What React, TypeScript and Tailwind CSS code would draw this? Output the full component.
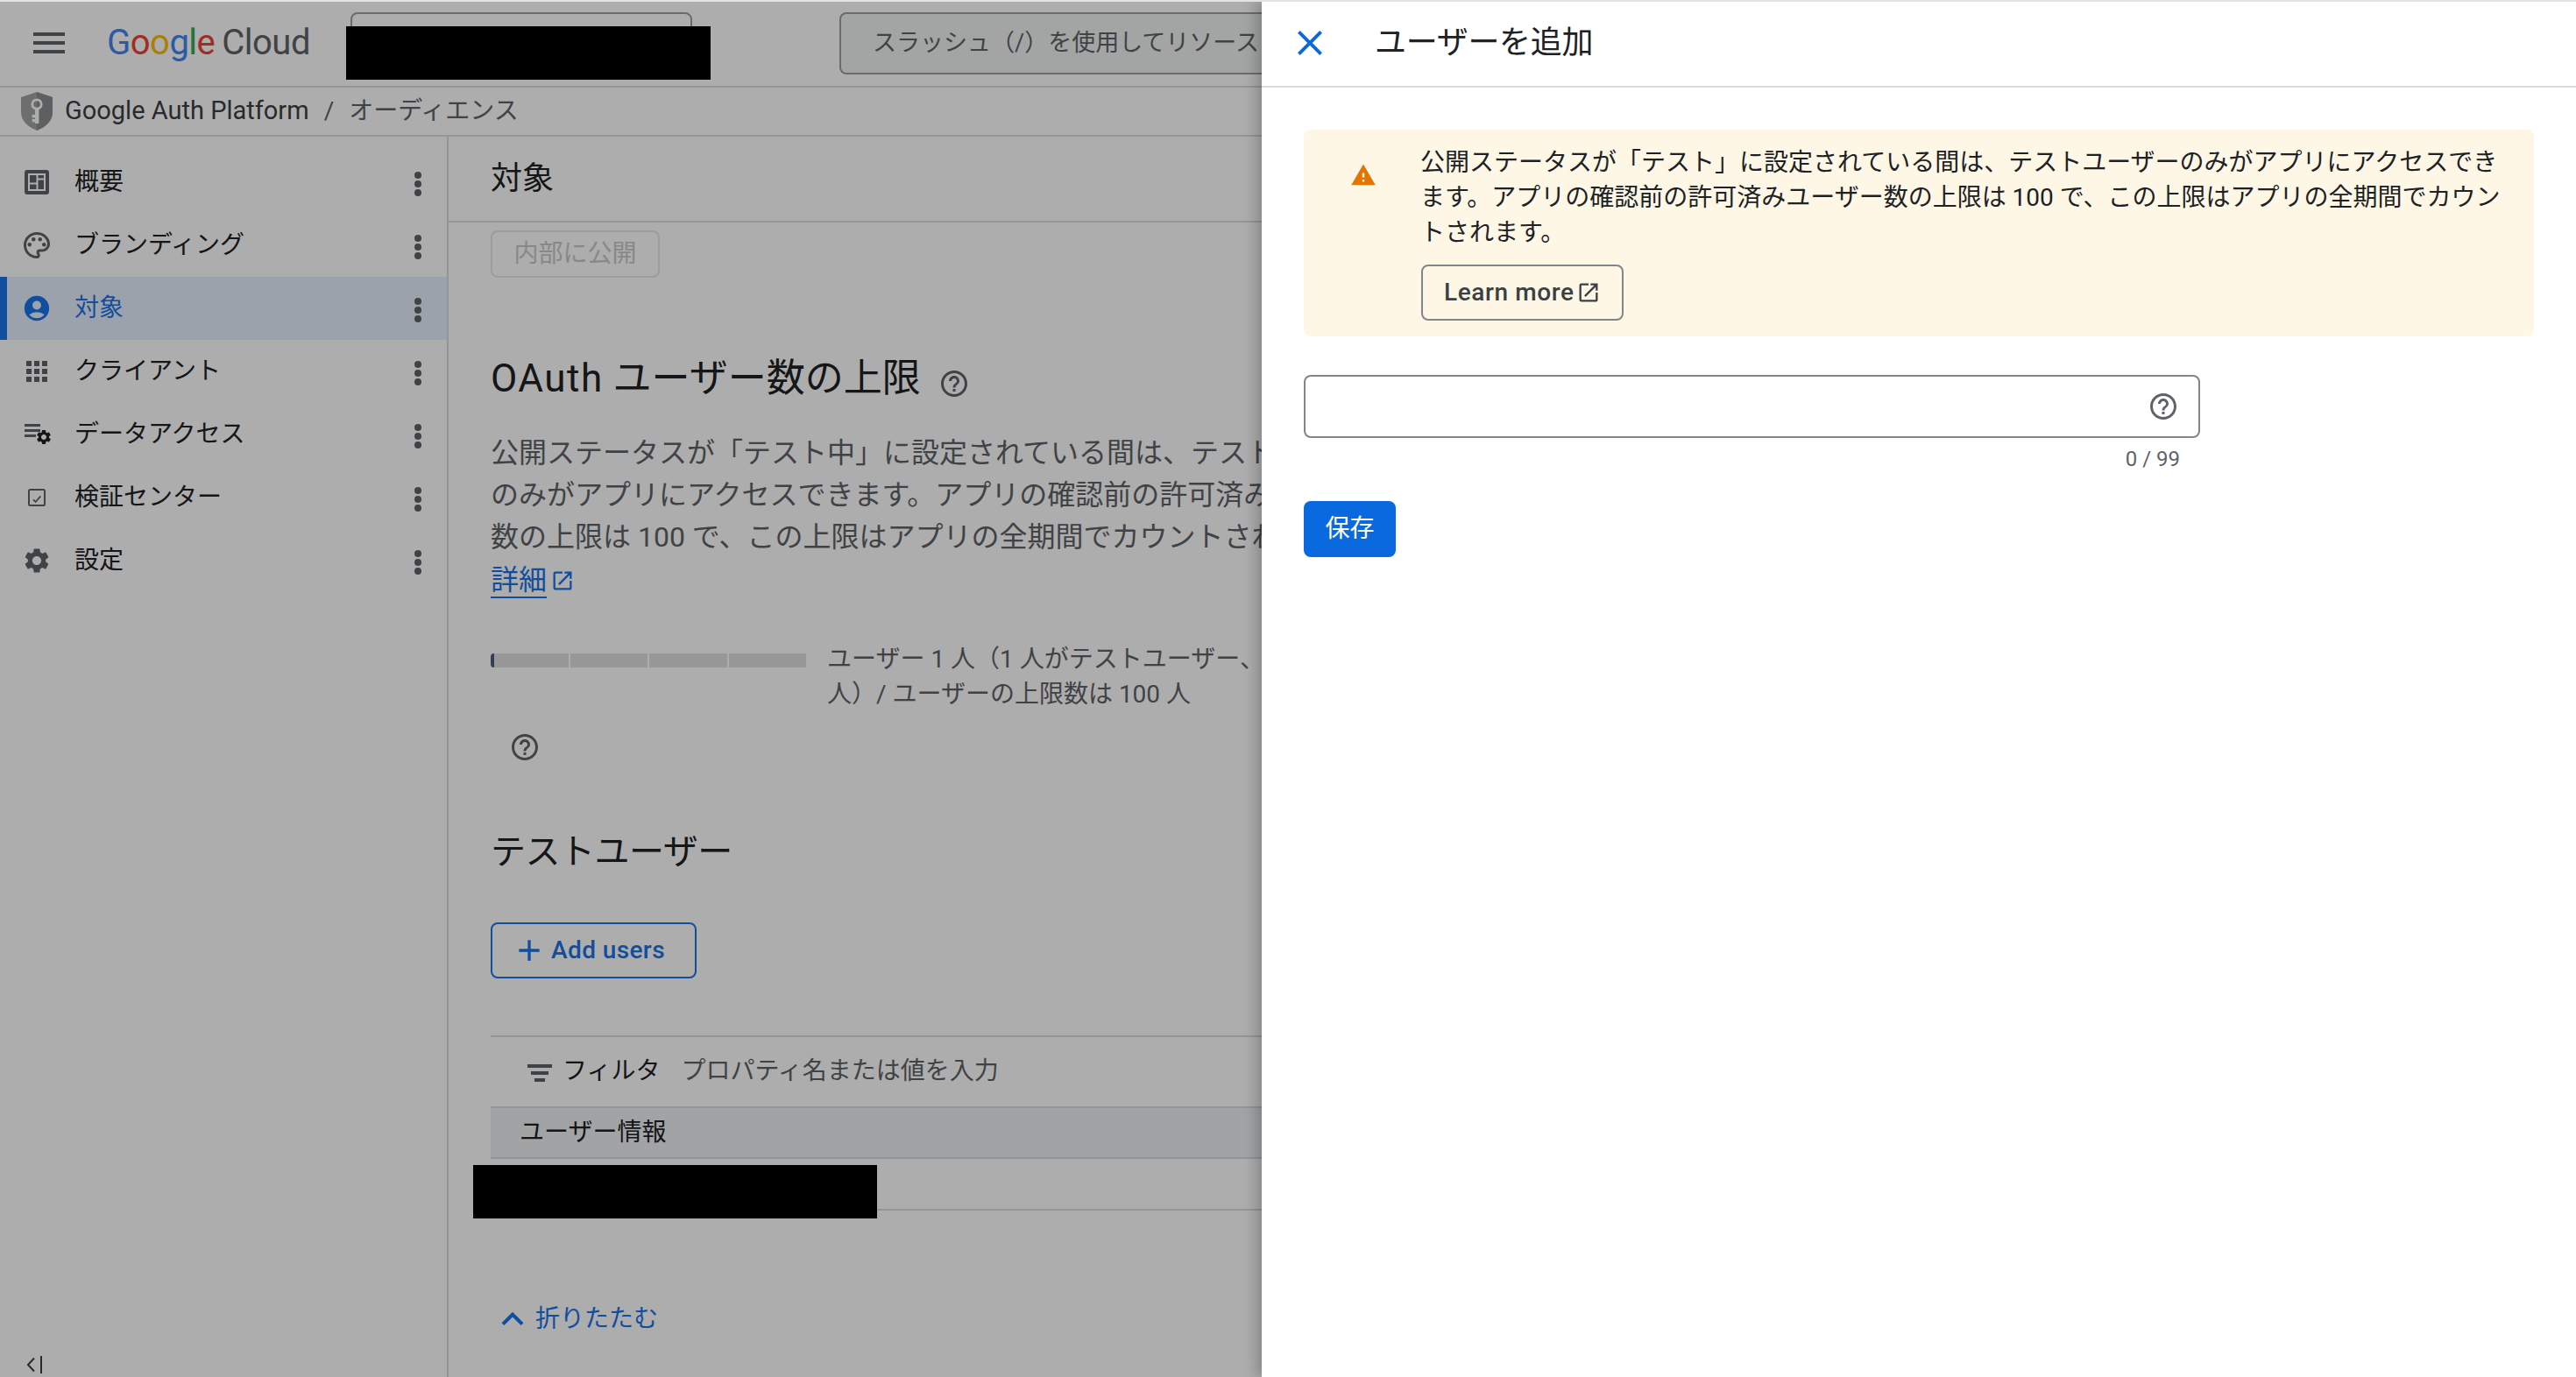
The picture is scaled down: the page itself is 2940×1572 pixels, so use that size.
import React from "react";
import {
  MdAccountCircle,
  MdAdd,
  MdApps,
  MdClose,
  MdExpandLess,
  MdHelpOutline,
  MdMenu,
  MdOpenInNew,
  MdOutlinePalette,
  MdSettings,
  MdWarning,
} from "react-icons/md";

function DashIcon() {
  return (
    <svg width="28" height="28" viewBox="0 0 28 28">
      <rect width="28" height="28" rx="3" fill="#5f6368" />
      <rect x="4" y="4" width="20" height="20" fill="#fff" />
      <rect x="6" y="6" width="7.5" height="8.5" fill="#5f6368" />
      <rect x="6" y="16.5" width="7.5" height="5.5" fill="#5f6368" />
      <rect x="15.5" y="6" width="6.5" height="3.5" fill="#5f6368" />
      <rect x="15.5" y="11.5" width="6.5" height="10.5" fill="#5f6368" />
    </svg>
  );
}

function DataIcon() {
  return (
    <svg width="32" height="25" viewBox="0 0 32 25" fill="#5f6368" className="ml-[4px]">
      <rect x="0" y="0" width="18" height="3" />
      <rect x="0" y="6" width="18" height="3" />
      <rect x="0" y="12" width="13" height="3" />
      <MdSettings x={12} y={5} size={20} />
    </svg>
  );
}

function CheckIcon() {
  return (
    <svg width="20" height="20" viewBox="0 0 20 20" fill="none">
      <rect x="1" y="1" width="18" height="18" rx="1.5" stroke="#5f6368" strokeWidth="2" />
      <path d="M6 12.3L8.7 15L14.3 8.3" stroke="#5f6368" strokeWidth="1.8" />
    </svg>
  );
}

function ShieldIcon() {
  return (
    <svg width="36" height="44" viewBox="0 0 36 44">
      <path d="M18 0L36 6V23C36 33 28 40 18 44C8 40 0 33 0 23V6Z" fill="#a0a3a6" />
      <path d="M18 0L36 6V23C36 33 28 40 18 44Z" fill="#8a8d90" />
      <circle cx="18" cy="14" r="5.2" fill="none" stroke="#fff" strokeWidth="2.8" />
      <rect x="16" y="19" width="4.4" height="17" fill="#fff" />
      <rect x="12.6" y="26" width="3.6" height="3.4" fill="#fff" />
      <rect x="12.6" y="31" width="3.6" height="3.4" fill="#fff" />
    </svg>
  );
}

function CollapseIcon() {
  return (
    <svg width="20" height="20" viewBox="0 0 20 20" fill="none" stroke="#3c4043" strokeWidth="2">
      <path d="M9 2.5L2 10l7 7.5" />
      <path d="M17 0v20" />
    </svg>
  );
}

function FilterBars() {
  return (
    <svg width="28" height="20" viewBox="0 0 28 20" fill="#5f6368" className="mt-[3px]">
      <rect x="0" y="0" width="28" height="4" />
      <rect x="4" y="8" width="20" height="4" />
      <rect x="8" y="16" width="12" height="4" />
    </svg>
  );
}

function Dots() {
  return (
    <svg width="10" height="28" viewBox="0 0 10 28" fill="#5f6368" className="ml-auto translate-y-[2px]">
      <circle cx="5" cy="4" r="4" />
      <circle cx="5" cy="14" r="4" />
      <circle cx="5" cy="24" r="4" />
    </svg>
  );
}

const navItems: { label: string; icon: React.ReactNode; active?: boolean }[] = [
  { label: "概要", icon: <DashIcon /> },
  { label: "ブランディング", icon: <MdOutlinePalette size={36} color="#5f6368" /> },
  { label: "対象", icon: <MdAccountCircle size={34} color="#1a73e8" />, active: true },
  { label: "クライアント", icon: <MdApps size={36} color="#5f6368" /> },
  { label: "データアクセス", icon: <DataIcon /> },
  { label: "検証センター", icon: <CheckIcon /> },
  { label: "設定", icon: <MdSettings size={34} color="#5f6368" /> },
];

function Sidebar() {
  return (
    <aside className="flex w-[512px] shrink-0 flex-col border-r-2 border-[#dadce0] pt-[16px]">
      {navItems.map((item) => (
        <div
          key={item.label}
          className={`flex h-[72px] items-center border-l-8 pl-[16px] pr-[28px] ${
            item.active ? "border-[#1a73e8] bg-[#e6effc] text-[#1a73e8]" : "border-transparent text-[#202124]"
          }`}
        >
          <span className="flex w-[36px] items-center justify-center">{item.icon}</span>
          <span className="ml-[25px] text-[28px] leading-[40px]">{item.label}</span>
          <Dots />
        </div>
      ))}
      <div className="mt-auto pb-[4px] pl-[30px]">
        <CollapseIcon />
      </div>
    </aside>
  );
}

function Main() {
  return (
    <main className="min-w-0 flex-1">
      <div className="flex h-[98px] items-center border-b-2 border-[#dadce0] pl-[48px]">
        <h1 className="text-[36px] font-normal leading-[48px] text-[#202124]">対象</h1>
      </div>
      <div className="pl-[48px]">
        <div className="mt-[9px] flex h-[54px] w-[193px] items-center justify-center rounded-[8px] border-2 border-[#e6e6e6] text-[28px] text-[#c9c9c9]">
          内部に公開
        </div>

        <div className="mt-[85px] flex h-[60px] items-center">
          <h2 className="whitespace-nowrap text-[44px] font-normal leading-[60px] text-[#202124]">
            <span className="tracking-[1.5px]">OAuth</span> ユーザー数の上限
          </h2>
          <MdHelpOutline size={36} color="#5f6368" className="ml-[20px] mt-[12px]" />
        </div>

        <div className="mt-[31px] whitespace-nowrap text-[32px] leading-[48px] text-[#5f6368]">
          <p>公開ステータスが「テスト中」に設定されている間は、テスト</p>
          <p>のみがアプリにアクセスできます。アプリの確認前の許可済み</p>
          <p>数の上限は 100 で、この上限はアプリの全期間でカウントされ</p>
          <div className="flex h-[48px] items-start pt-[6px] text-[#1a73e8]">
            <span className="h-[40px] border-b-2 border-[#1a73e8] leading-[38px]">詳細</span>
            <MdOpenInNew size={28} className="ml-[4px] mt-[6px]" />
          </div>
        </div>

        <div className="mt-[46px] flex">
          <div className="mt-[15px] flex h-[16px] w-[360px] shrink-0 gap-[2px] overflow-hidden rounded-l-[4px]">
            <div className="flex-1 bg-[#e0e0e0]">
              <div className="h-full w-[4px] bg-[#4a5f7a]" />
            </div>
            <div className="flex-1 bg-[#e0e0e0]" />
            <div className="flex-1 bg-[#e0e0e0]" />
            <div className="flex-1 bg-[#e0e0e0]" />
          </div>
          <div className="ml-[24px] whitespace-nowrap pt-[2px] text-[28px] leading-[40px] text-[#5f6368]">
            <p>ユーザー 1 人（1 人がテストユーザー、</p>
            <p>人）/ ユーザーの上限数は 100 人</p>
          </div>
        </div>

        <MdHelpOutline size={36} color="#5f6368" className="ml-[21px] mt-[22px]" />

        <h2 className="mt-[74px] text-[40px] font-normal leading-[56px] tracking-[-0.5px] text-[#202124]">テストユーザー</h2>

        <button className="mt-[52px] flex h-[64px] w-[235px] items-center rounded-[8px] border-2 border-[#1a73e8] pl-[22px] text-[28px] font-medium tracking-[0.4px] text-[#1a73e8]">
          <MdAdd size={40} />
          <span className="ml-[5px]">Add users</span>
        </button>

        <div className="mt-[65px] border-t-2 border-[#dadce0]">
          <div className="flex h-[79px] items-center pl-[42px] text-[28px]">
            <FilterBars />
            <span className="ml-[12px] -translate-y-[1px] text-[#202124]">フィルタ</span>
            <span className="ml-[24px] -translate-y-[1px] whitespace-nowrap text-[#5f6368]">プロパティ名または値を入力</span>
          </div>
          <div className="flex h-[60px] items-center border-y-2 border-[#dadce0] bg-[#edf0f2] pl-[33px] text-[28px] text-[#202124]">
            ユーザー情報
          </div>
          <div className="h-[59px] border-b-2 border-[#dadce0]" />
        </div>

        <div className="mt-[100px] flex h-[48px] items-center text-[28px] text-[#1a73e8]">
          <MdExpandLess size={50} className="shrink-0" />
          <span className="ml-[1px]">折りたたむ</span>
        </div>
      </div>
    </main>
  );
}

function Panel() {
  return (
    <section className="absolute bottom-0 left-[1440px] right-0 top-0 bg-white shadow-[-6px_0_14px_rgba(0,0,0,0.22)]">
      <header className="flex h-[100px] items-center border-b-2 border-[#dadce0] pl-[31px]">
        <MdClose size={48} color="#0b69e0" className="shrink-0" />
        <h2 className="ml-[50px] text-[36px] font-normal leading-[48px] tracking-[-0.3px] text-[#202124]">ユーザーを追加</h2>
      </header>
      <div className="px-[48px] pt-[48px]">
        <div className="flex h-[236px] rounded-[8px] bg-[#fef7e6] pl-[53px] pr-[32px] pt-[18px]">
          <MdWarning size={30} color="#e37400" className="mt-[19px] shrink-0" />
          <div className="ml-[50px] min-w-0 flex-1">
            <p className="text-[28px] leading-[40px] text-[#202124]">
              公開ステータスが「テスト」に設定されている間は、テストユーザーのみがアプリにアクセスできます。アプリの確認前の許可済みユーザー数の上限は 100 で、この上限はアプリの全期間でカウントされます。
            </p>
            <button className="ml-[1px] mt-[16px] flex h-[64px] w-[231px] items-center rounded-[8px] border-2 border-[#80868b] pl-[24px] text-[28px] font-medium tracking-[0.6px] text-[#3c4043]">
              <span>Learn more</span>
              <MdOpenInNew size={28} className="ml-[2px]" />
            </button>
          </div>
        </div>

        <div className="mt-[44px] w-[1023px]">
          <div className="flex h-[72px] items-center justify-end rounded-[8px] border-2 border-[#80868b] pr-[22px]">
            <MdHelpOutline size={36} color="#5f6368" />
          </div>
          <div className="mt-[8px] pr-[23px] text-right text-[24px] leading-[32px] text-[#5f6368]">0 / 99</div>
        </div>

        <button className="mt-[32px] flex h-[64px] w-[105px] items-center justify-center rounded-[8px] bg-[#0b69e0] text-[28px] text-white">
          保存
        </button>
      </div>
    </section>
  );
}

export default function App() {
  return (
    <div className="relative h-[1572px] w-[2940px] overflow-hidden bg-white font-['Roboto','Noto_Sans_CJK_JP',sans-serif]">
      <header className="flex h-[100px] items-center border-b-2 border-[#dadce0] pl-[32px]">
        <MdMenu size={48} color="#5f6368" className="shrink-0" />
        <div className="ml-[42px] flex w-[278px] shrink-0 items-center text-[40px] leading-[48px] tracking-[-0.5px]">
          <span className="text-[#4285f4]">G</span>
          <span className="text-[#ea4335]">o</span>
          <span className="text-[#fbbc04]">o</span>
          <span className="text-[#4285f4]">g</span>
          <span className="text-[#34a853]">l</span>
          <span className="text-[#ea4335]">e</span>
          <span className="ml-[8px] text-[#5f6368]">Cloud</span>
        </div>
        <div className="h-[71px] w-[390px] shrink-0 rounded-[8px] border-2 border-[#9aa0a6]" />
        <div className="ml-[168px] flex h-[71px] w-[482px] shrink-0 items-center rounded-l-[8px] border-y-2 border-l-2 border-[#9aa0a6] bg-[#f1f3f4] pl-[36px] text-[27px] text-[#5f6368]">
          <span className="whitespace-nowrap">スラッシュ（/）を使用してリソース</span>
        </div>
      </header>

      <div className="flex h-[56px] items-center border-b-2 border-[#dadce0] pl-[24px] text-[28px] text-[#5f6368]">
        <ShieldIcon />
        <span className="ml-[14px] text-[29px] text-[#3c4043]">Google Auth Platform</span>
        <span className="ml-[17px]">/</span>
        <span className="ml-[17px]">オーディエンス</span>
      </div>

      <div className="flex h-[1416px]">
        <Sidebar />
        <Main />
      </div>

      <div className="absolute inset-0 bg-black/32" />
      <Panel />

      <div className="absolute left-[395px] top-[30px] h-[61px] w-[416px] bg-black" />
      <div className="absolute left-[540px] top-[1330px] h-[61px] w-[461px] bg-black" />
      <div className="absolute left-0 top-0 h-[2px] w-full bg-[#e3e3e3]" />
    </div>
  );
}
